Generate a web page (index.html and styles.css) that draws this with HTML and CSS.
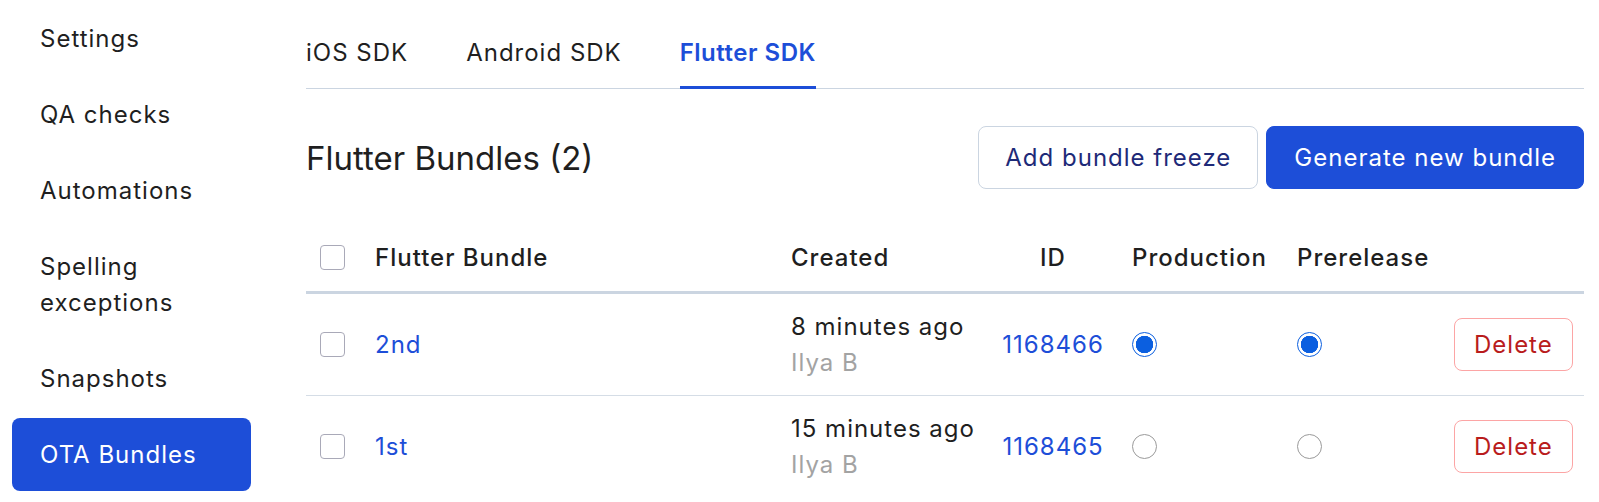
FILE: index.html
```html
<!DOCTYPE html>
<html lang="en">
<head>
    <meta charset="UTF-8">
    <meta name="viewport" content="width=device-width, initial-scale=1">
    <title>OTA Bundles</title>
    <link rel="stylesheet" href="styles.css">
</head>
<body>
    <div class="layout">
        <!-- Project settings menu -->
        <nav class="side-nav">
            <a class="nav-item" href="#">Settings</a>
            <a class="nav-item" href="#">QA checks</a>
            <a class="nav-item" href="#">Automations</a>
            <a class="nav-item" href="#">Spelling<br>exceptions</a>
            <a class="nav-item" href="#">Snapshots</a>
            <a class="nav-item active" href="#">OTA Bundles</a>
        </nav>

        <main class="content">
            <div class="tabs">
                <a class="tab" href="#">iOS SDK</a>
                <a class="tab" href="#">Android SDK</a>
                <a class="tab active" href="#">Flutter SDK</a>
            </div>

            <div class="page-head">
                <h1>Flutter Bundles (2)</h1>
                <div class="actions">
                    <button class="btn btn-outline" type="button">Add bundle freeze</button>
                    <button class="btn btn-primary" type="button">Generate new bundle</button>
                </div>
            </div>

            <table class="bundles">
                <colgroup>
                    <col class="col-check">
                    <col class="col-name">
                    <col class="col-created">
                    <col class="col-id">
                    <col class="col-prod">
                    <col class="col-pre">
                    <col>
                </colgroup>
                <thead>
                    <tr>
                        <th><input class="check" type="checkbox"></th>
                        <th>Flutter Bundle</th>
                        <th>Created</th>
                        <th class="center">ID</th>
                        <th>Production</th>
                        <th>Prerelease</th>
                        <th></th>
                    </tr>
                </thead>
                <tbody>
                    <tr>
                        <td><input class="check" type="checkbox"></td>
                        <td><a class="link" href="#">2nd</a></td>
                        <td>8 minutes ago<div class="muted">Ilya B</div></td>
                        <td class="center"><a class="link" href="#">1168466</a></td>
                        <td><input class="radio" type="radio" name="production" checked></td>
                        <td><input class="radio" type="radio" name="prerelease" checked></td>
                        <td class="right"><button class="btn btn-danger" type="button">Delete</button></td>
                    </tr>
                    <tr>
                        <td><input class="check" type="checkbox"></td>
                        <td><a class="link" href="#">1st</a></td>
                        <td>15 minutes ago<div class="muted">Ilya B</div></td>
                        <td class="center"><a class="link" href="#">1168465</a></td>
                        <td><input class="radio" type="radio" name="production"></td>
                        <td><input class="radio" type="radio" name="prerelease"></td>
                        <td class="right"><button class="btn btn-danger" type="button">Delete</button></td>
                    </tr>
                </tbody>
            </table>
        </main>
    </div>
</body>
</html>
```

FILE: styles.css
```css
body {
    margin: 0;
    font-family: Inter, "Noto Sans", sans-serif;
    font-size: 24px;
    line-height: 36px;
    letter-spacing: 1px;
    color: #1f1f1f;
    background-color: #fff;
}

a {
    color: inherit;
    text-decoration: none;
}

.layout {
    display: flex;
    gap: 55px;
    padding-right: 15px;
}

/* Left menu */
.side-nav {
    display: flex;
    flex-direction: column;
    gap: 3px;
    width: 239px;
    margin-left: 12px;
    padding-top: 2px;
    flex-shrink: 0;
}

.nav-item {
    padding: 18.5px 28px;
    border-radius: 8px;
}

.nav-item.active {
    background-color: #1d4ed8;
    color: #fff;
}

.content {
    flex: 1;
    padding-top: 17px;
}

/* SDK tabs */
.tabs {
    display: flex;
    gap: 58px;
    border-bottom: 1px solid #cbd5e1;
}

.tab {
    padding: 18px 0 15px;
    border-bottom: 3px solid transparent;
    margin-bottom: -1px;
}

.tab.active {
    color: #1d4ed8;
    font-weight: 600;
    letter-spacing: 0.5px;
    border-bottom-color: #1d4ed8;
}

.page-head {
    display: flex;
    align-items: center;
    justify-content: space-between;
    margin: 37px 0 35px;
}

h1 {
    margin: 0;
    font-size: 33px;
    font-weight: 400;
    letter-spacing: 0;
}

.actions {
    display: flex;
    gap: 8px;
}

.btn {
    font-family: inherit;
    font-size: 24px;
    line-height: 36px;
    letter-spacing: 1px;
    border-radius: 8px;
    cursor: pointer;
}

.btn-outline {
    height: 63px;
    padding: 0 26px;
    background-color: #fff;
    color: #1e2a78;
    border: 1px solid #cbd5e1;
}

.btn-primary {
    height: 63px;
    padding: 0 27px;
    background-color: #1d4ed8;
    color: #fff;
    border: 1px solid #1d4ed8;
}

.btn-danger {
    height: 53px;
    padding: 0 19px;
    background-color: #fff;
    color: #b91c1c;
    border: 1px solid #fca5a5;
}

/* Bundles table */
.bundles {
    width: 100%;
    border-collapse: collapse;
    table-layout: fixed;
}

.col-check { width: 55px; }
.col-name { width: 416px; }
.col-created { width: 211px; }
.col-id { width: 130px; }
.col-prod { width: 165px; }
.col-pre { width: 157px; }

th, td {
    padding: 15.5px 14px;
    text-align: left;
    vertical-align: middle;
    white-space: nowrap;
}

th {
    font-weight: 500;
    border-bottom: 3px solid #cbd5e1;
}

td {
    padding-top: 14.5px;
    padding-bottom: 14.5px;
    border-bottom: 1px solid #d5dde6;
}

tbody tr:last-child td {
    border-bottom: none;
}

.center { text-align: center; }
.right { text-align: right; }

.link {
    color: #1d4ed8;
}

.muted {
    color: #a3a3a3;
}

.check {
    appearance: none;
    display: block;
    width: 25px;
    height: 25px;
    margin: 0;
    border: 1.5px solid #a9a9b8;
    border-radius: 4px;
    background-color: #fff;
}

.radio {
    appearance: none;
    display: block;
    width: 25px;
    height: 25px;
    margin: 0;
    border: 1.5px solid #9a9a9a;
    border-radius: 50%;
    background-color: #fff;
}

.radio:checked {
    border-color: #0b5fe0;
    background: radial-gradient(circle, #0b5fe0 8.5px, #fff 9px);
}
```
